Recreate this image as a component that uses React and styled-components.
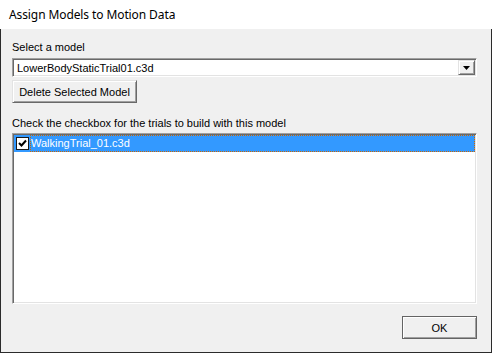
import styled, { createGlobalStyle } from 'styled-components';

const GlobalStyle = createGlobalStyle`
  html, body {
    margin: 0;
    padding: 0;
    background: #ffffff;
  }
`;

const Window = styled.div`
  width: 492px;
  height: 353px;
  display: flex;
  flex-direction: column;
  box-sizing: border-box;
  font-family: 'Liberation Sans', Arial, sans-serif;
  font-size: 11px;
  color: #000;
`;

const TitleBar = styled.div`
  height: 29px;
  flex-shrink: 0;
  background: #ffffff;
  display: flex;
  align-items: center;
  padding-left: 9px;
  font-family: 'Noto Sans', 'Open Sans', sans-serif;
  font-size: 12px;
  color: #000;
  letter-spacing: -0.1px;
`;

const Body = styled.div`
  flex: 1;
  background: #f0f0f0;
  border: 1px solid #2b2b2b;
  border-top: none;
  display: flex;
  flex-direction: column;
  padding: 12px 14px 13px 11px;
`;

const Label = styled.div`
  height: 13px;
  line-height: 13px;
  margin-bottom: ${(p) => p.gap || 4}px;
  white-space: nowrap;
`;

const Combo = styled.div`
  height: 19px;
  box-sizing: border-box;
  display: flex;
  align-items: stretch;
  background: #ffffff;
  border-top: 1px solid #a0a0a0;
  border-left: 1px solid #a0a0a0;
  border-right: 1px solid #ffffff;
  border-bottom: 1px solid #ffffff;
  box-shadow: inset 1px 1px 0 #696969, inset -1px -1px 0 #e3e3e3;
  padding: 1px 2px 1px 2px;
`;

const ComboText = styled.div`
  flex: 1;
  line-height: 16px;
  padding-left: 2px;
`;

const ComboArrow = styled.div`
  width: 17px;
  box-sizing: border-box;
  margin: 0 -1px 0 0;
  background: #f0f0f0;
  border-top: 1px solid #e3e3e3;
  border-left: 1px solid #e3e3e3;
  border-right: 1px solid #696969;
  border-bottom: 1px solid #696969;
  box-shadow: inset 1px 1px 0 #ffffff, inset -1px -1px 0 #a0a0a0;
  display: flex;
  align-items: center;
  justify-content: center;
`;

const Button = styled.button`
  width: ${(p) => p.width}px;
  height: 23px;
  box-sizing: border-box;
  padding: 0;
  margin-top: ${(p) => p.top || 0}px;
  align-self: ${(p) => p.align || 'flex-start'};
  font-family: 'Liberation Sans', Arial, sans-serif;
  font-size: 11px;
  color: #000;
  background: #f0f0f0;
  border-top: 1px solid #e3e3e3;
  border-left: 1px solid #e3e3e3;
  border-right: 1px solid #696969;
  border-bottom: 1px solid #696969;
  box-shadow: inset 1px 1px 0 #ffffff, inset -1px -1px 0 #a0a0a0;
`;

const FramedButton = styled(Button)`
  border: 1px solid #646464;
  box-shadow: inset 1px 1px 0 #ffffff, inset -1px -1px 0 #a0a0a0;
`;

const ListBox = styled.div`
  height: 171px;
  box-sizing: border-box;
  background: #ffffff;
  border-top: 1px solid #a0a0a0;
  border-left: 1px solid #a0a0a0;
  border-right: 1px solid #ffffff;
  border-bottom: 1px solid #ffffff;
  box-shadow: inset 1px 1px 0 #696969, inset -1px -1px 0 #e3e3e3;
  padding: 1px 1px 1px 1px;
  display: flex;
  flex-direction: column;
`;

const ListRow = styled.div`
  height: 17px;
  display: flex;
  align-items: center;
  background: ${(p) => (p.selected ? '#3399ff' : 'transparent')};
  color: ${(p) => (p.selected ? '#ffffff' : '#000')};
  padding-left: 2px;
`;

const CheckBox = styled.div`
  width: 13px;
  height: 13px;
  box-sizing: border-box;
  background: #ffffff;
  border: 1px solid #1a1a1a;
  display: flex;
  align-items: center;
  justify-content: center;
  flex-shrink: 0;
`;

const RowText = styled.div`
  flex: 1;
  height: 17px;
  box-sizing: border-box;
  margin-left: 1px;
  line-height: 15px;
  border: 1px dotted #cc6600;
  padding-left: 0px;
  white-space: nowrap;
`;

const Spacer = styled.div`
  flex: 1;
`;

export default function App() {
  return (
    <>
      <GlobalStyle />
      <Window>
        <TitleBar>Assign Models to Motion Data</TitleBar>
        <Body>
          <Label>Select a model</Label>
          <Combo>
            <ComboText>LowerBodyStaticTrial01.c3d</ComboText>
            <ComboArrow>
              <svg width="7" height="4" viewBox="0 0 7 4">
                <path d="M0 0H7L3.5 4Z" fill="#000" />
              </svg>
            </ComboArrow>
          </Combo>
          <Button width={125} top={3}>Delete Selected Model</Button>
          <Label gap={3} style={{ marginTop: 14 }}>
            Check the checkbox for the trials to build with this model
          </Label>
          <ListBox>
            <ListRow selected>
              <CheckBox>
                <svg width="9" height="9" viewBox="0 0 9 9">
                  <path d="M1 4L3.5 6.5L8 1.5" stroke="#000" strokeWidth="2" fill="none" />
                </svg>
              </CheckBox>
              <RowText>WalkingTrial_01.c3d</RowText>
            </ListRow>
          </ListBox>
          <Spacer />
          <FramedButton width={75} align="flex-end">OK</FramedButton>
        </Body>
      </Window>
    </>
  );
}
